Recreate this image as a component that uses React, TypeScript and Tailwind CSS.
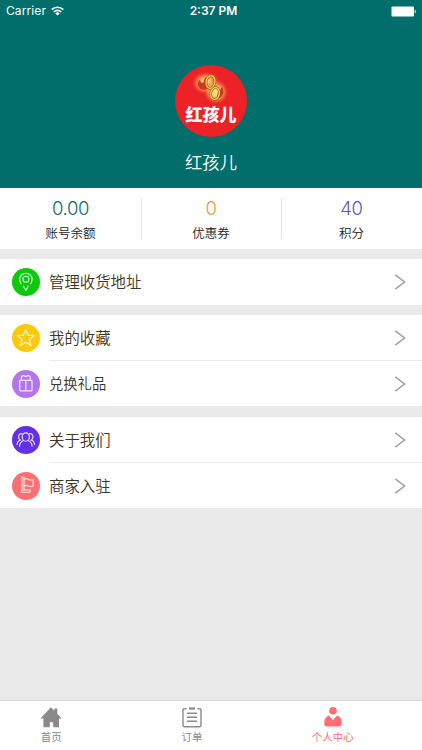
import type { ReactNode } from 'react';

type Row = {
  label: string;
  color: string;
  height: string;
  textSize: string;
  icon: ReactNode;
};

const pinIcon = (
  <>
    <path d="M9.400 16.200C8.300 14.800 7.700 13 7.700 11.400a6.200 6.200 0 0 1 12.400 0c0 1.600-.6 3.400-1.700 4.800" />
    <circle cx="13.900" cy="11.200" r="3" />
    <path d="M11.200 17.800l2.700 4.500 2.700-4.500" />
  </>
);

const starIcon = (
  <path d="M13.800 5.900l2.300 5.200 5.700.6-4.300 3.800 1.300 5.700-5-3-5 3 1.300-5.700-4.300-3.800 5.700-.6z" />
);

const giftIcon = (
  <>
    <rect x="7.700" y="10.300" width="12.300" height="10.500" rx="0.500" />
    <path d="M13.850 10.500v10.300" />
    <path d="M9.500 10.300V7.500c0-1.500 1-1.900 2-1.900 1 0 1.600.5 2.300 1.300.7-.8 1.300-1.300 2.300-1.300s2 .4 2 1.900v2.800" />
  </>
);

const peopleIcon = (
  <>
    <ellipse cx="13.800" cy="11" rx="3.600" ry="4.200" />
    <path d="M7.500 20.700c0-3.200 1.800-5.400 4.300-6.200M20.100 20.700c0-3.200-1.800-5.400-4.300-6.200" />
    <path d="M10.800 7.900c-2.300-1-4.200.4-4.200 2.900 0 1.600.7 2.700 1.700 3.300-2.100.6-3.200 2.500-3.300 5" />
    <path d="M16.800 7.900c2.300-1 4.200.4 4.200 2.900 0 1.600-.7 2.700-1.700 3.300 2.100.6 3.200 2.500 3.300 5" />
  </>
);

const flagIcon = (
  <>
    <path d="M10 18V5.300h2V18M9.500 18h8.500v2.200H9.500z" />
    <path d="M12 7.300c2.300-1.300 3.400-.6 4.600.1 1.500.8 2.900.9 4.600 0v6.500c-1.700.9-3.100.7-4.600 0-1.300-.7-2.400-.9-4.600.2" />
  </>
);

const groups: Row[][] = [
  [{ label: '管理收货地址', color: 'bg-[#0bc90b]', height: 'h-[46px]', textSize: 'text-[15.4px]', icon: pinIcon }],
  [
    { label: '我的收藏', color: 'bg-[#fdc90a]', height: 'h-[46px]', textSize: 'text-[15.4px]', icon: starIcon },
    { label: '兑换礼品', color: 'bg-[#b475ec]', height: 'h-[45px]', textSize: 'text-[14.3px]', icon: giftIcon },
  ],
  [
    { label: '关于我们', color: 'bg-[#6230e8]', height: 'h-[46px]', textSize: 'text-[15.4px]', icon: peopleIcon },
    { label: '商家入驻', color: 'bg-[#fd6f70]', height: 'h-[45px]', textSize: 'text-[15.4px]', icon: flagIcon },
  ],
];

const stats = [
  { value: '0.00', label: '账号余额', color: 'text-[#0b6c68]' },
  { value: '0', label: '优惠券', color: 'text-[#f0964a]' },
  { value: '40', label: '积分', color: 'text-[#5a55c0]' },
];

function StatusBar() {
  return (
    <div className="grid h-[22px] grid-cols-3 items-center px-[6px] font-['Inter'] text-[12px] text-white">
      <div className="flex items-center gap-[5px]">
        <span className="tracking-[0.1px]">Carrier</span>
        <svg width="13" height="10" viewBox="0 0 13 10" fill="none" stroke="currentColor" strokeWidth="1.700">
          <path d="M.7 3.600a8.300 8.300 0 0 1 11.600 0M2.800 5.900a5.300 5.300 0 0 1 7.400 0" />
          <path d="M6.500 9.500L4.300 7.400a3.200 3.200 0 0 1 4.400 0z" fill="currentColor" stroke="none" />
        </svg>
      </div>
      <span className="pl-[5px] text-center font-semibold">2:37 PM</span>
      <svg className="-mr-[1px] justify-self-end" width="26" height="11" viewBox="0 0 26 11" fill="currentColor">
        <rect x="0.500" y="0.500" width="22.500" height="10" rx="1" />
        <path d="M23.800 3.500c1.300.4 1.300 3.600 0 4z" />
      </svg>
    </div>
  );
}

function Avatar() {
  return (
    <div className="relative h-[72px] w-[72px] overflow-hidden rounded-full bg-[#ec2227]">
      <svg className="absolute inset-0" width="72" height="72" viewBox="0 0 72 72" fill="none">
        <defs>
          <radialGradient id="glow">
            <stop offset="0.300" stopColor="#ffe08a" stopOpacity="0.950" />
            <stop offset="0.650" stopColor="#f98a50" stopOpacity="0.700" />
            <stop offset="1" stopColor="#ec2227" stopOpacity="0" />
          </radialGradient>
        </defs>
        <ellipse cx="31" cy="18" rx="15" ry="12" fill="url(#glow)" />
        <ellipse cx="41" cy="27" rx="13" ry="13" fill="url(#glow)" />
        <path d="M24 15c2 1 2 3 4 3 1-2 1-4 3-6l2 11c-3 3-8 2-9-1-1-2-2-3 0-7z" fill="#cf3922" />
        <path d="M47 22c2 3 2 8-1 10-2 2-3 1-4 0l1-5c2-1 2-3 4-5z" fill="#cf3922" />
        <ellipse cx="35.500" cy="17" rx="4.300" ry="6.500" stroke="#9a6416" strokeWidth="2.600" transform="rotate(8 35.500 17)" />
        <ellipse cx="35.500" cy="17" rx="4.300" ry="6.500" stroke="#f5cf4a" strokeWidth="1.300" transform="rotate(8 35.500 17)" />
        <ellipse cx="40" cy="28.500" rx="4.300" ry="6" stroke="#9a6416" strokeWidth="2.600" transform="rotate(12 40 28.500)" />
        <ellipse cx="40" cy="28.500" rx="4.300" ry="6" stroke="#f5cf4a" strokeWidth="1.300" transform="rotate(12 40 28.500)" />
      </svg>
      <span className="absolute inset-x-0 top-[39px] text-center text-[17px] leading-5 font-black text-white">
        红孩儿
      </span>
    </div>
  );
}

function ListRow({ row, divider }: { row: Row; divider: boolean }) {
  return (
    <div className={`flex pl-[11.5px] ${row.height}`}>
      <div className="flex items-center">
        <span className={`flex h-7 w-7 items-center justify-center rounded-full ${row.color}`}>
          <svg width="28" height="28" viewBox="0 0 28 28" fill="none" stroke="white" strokeOpacity="0.850" strokeWidth="1.150">
            {row.icon}
          </svg>
        </span>
      </div>
      <div className={`ml-[9.5px] flex flex-1 items-center justify-between pr-[16px] ${divider ? 'border-b border-[#ececec]' : ''}`}>
        <span className={`pb-[2px] leading-6 font-[350] text-[#3d3520] ${row.textSize}`}>{row.label}</span>
        <svg width="12" height="16" viewBox="0 0 12 16" fill="none" stroke="#a0a0a0" strokeWidth="1.500">
          <path d="M1.300.8L10.600 8l-9.300 7.200" />
        </svg>
      </div>
    </div>
  );
}

function TabBar() {
  return (
    <nav className="grid h-[50px] grid-cols-3 border-t border-[#d5d5d5] bg-white text-[10.5px] text-[#8a8a8a]">
      <div className="flex flex-col items-center pr-[38px] pt-[6px]">
        <svg width="22" height="21" viewBox="0 0 22 21" fill="currentColor">
          <path d="M11 .3L14.300 3.700V1.500h3v5.300L21.700 11.500H19v8.800h-5.800v-5H9.800v5H3.400v-8.800H.4z" />
        </svg>
        <span className="mt-[1px] leading-4">首页</span>
      </div>
      <div className="flex flex-col items-center pr-[38px] pt-[6px]">
        <svg width="20" height="21" viewBox="0 0 20 21" fill="none" stroke="currentColor" strokeWidth="1.400">
          <path d="M4.500 1.700H2.400C1.500 1.700 1 2.200 1 3.100v15.200c0 .9.500 1.400 1.400 1.400h15.200c.9 0 1.400-.5 1.400-1.400V3.100c0-.9-.5-1.400-1.400-1.400h-2.100M5 6.300h10M5 10.300h10M5 14.300h10" />
          <path d="M7 1.500h6" strokeWidth="2.200" />
        </svg>
        <span className="mt-[1px] leading-4">订单</span>
      </div>
      <div className="flex flex-col items-center pr-[38px] pt-[6px] text-[#fb6e72]">
        <svg width="18" height="20" viewBox="0 0 18 20" fill="currentColor">
          <circle cx="9" cy="3.800" r="3.800" />
          <path d="M4.800 8.600L9 13l4.200-4.400c2.700.8 4.600 3.500 4.600 7.500 0 2.200-1 3.500-3 3.500H3.200c-2 0-3-1.300-3-3.500 0-4 1.900-6.700 4.600-7.500z" />
        </svg>
        <span className="mt-[2px] leading-4">个人中心</span>
      </div>
    </nav>
  );
}

export default function App() {
  return (
    <div className="flex h-[750px] w-[422px] flex-col bg-[#eaeaea] font-['Noto_Sans_CJK_SC',sans-serif]">
      <header className="h-[188px] bg-[#016e6b]">
        <StatusBar />
        <div className="flex flex-col items-center pt-[43px]">
          <Avatar />
          <h1 className="mt-[13px] text-[17.3px] leading-6 font-[350] text-white">红孩儿</h1>
        </div>
      </header>

      <section className="grid h-[61px] grid-cols-[141px_140px_141px] bg-white py-[9px]">
        {stats.map((s, i) => (
          <div key={s.label} className="relative flex flex-col items-center">
            <span className={`font-['Inter'] text-[18.5px] leading-[22px] font-[350] tracking-[-0.4px] ${s.color}`}>{s.value}</span>
            <span className="mt-[6px] text-[12.5px] leading-4 font-[350] text-[#222]">{s.label}</span>
            {i < 2 && <i className="absolute -right-px top-px h-[41px] w-px bg-[#e4e4e4]" />}
          </div>
        ))}
      </section>

      <main className="flex flex-1 flex-col pt-[10px]">
        {groups.map((rows, n) => (
          <section key={rows[0].label} className={`bg-white ${n === 0 ? 'mb-[10px]' : 'mb-[11px]'}`}>
            {rows.map((row, i) => (
              <ListRow key={row.label} row={row} divider={i < rows.length - 1} />
            ))}
          </section>
        ))}
      </main>

      <TabBar />
    </div>
  );
}
